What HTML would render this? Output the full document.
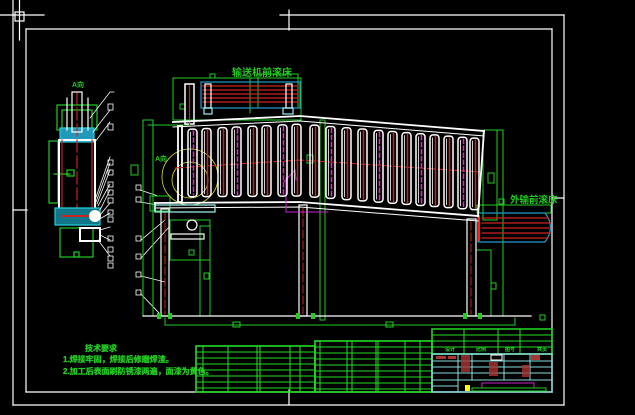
<!DOCTYPE html>
<html><head><meta charset="utf-8"><style>
html,body{margin:0;padding:0;background:#000;width:635px;height:415px;overflow:hidden}
svg{display:block}
text{font-family:"Liberation Sans","Noto Sans CJK SC",sans-serif;font-weight:bold}
</style></head><body>
<svg id="s" width="635" height="415" viewBox="0 0 635 415" xmlns="http://www.w3.org/2000/svg" fill="none" stroke-linecap="square">
<g stroke="#fff" stroke-width="1.2">
<line x1="13" y1="0" x2="13" y2="405"/><line x1="0" y1="15" x2="44" y2="15"/>
<rect x="15" y="12" width="9" height="9"/><line x1="19.5" y1="0" x2="19.5" y2="40"/>
<line x1="13" y1="405" x2="564" y2="405"/><line x1="564" y1="15" x2="564" y2="405"/>
<line x1="280" y1="15" x2="564" y2="15"/><line x1="289" y1="10" x2="289" y2="30"/>
<line x1="26" y1="29" x2="552" y2="29"/><line x1="26" y1="29" x2="26" y2="392"/>
<line x1="552" y1="29" x2="552" y2="392"/><line x1="26" y1="392" x2="552" y2="392"/>
<line x1="13" y1="210" x2="27" y2="210"/><line x1="289" y1="390" x2="289" y2="405"/>
<line x1="552" y1="198" x2="564" y2="198"/>
</g>
<g stroke-width="1.2">
<rect x="57" y="105" width="40" height="25" stroke="#2c2"/>
<rect x="62" y="110" width="30" height="18" stroke="#2c2"/>
<rect x="49" y="141" width="9" height="62" stroke="#2c2"/>
<line x1="54" y1="174" x2="70" y2="174" stroke="#2c2"/>
<rect x="67" y="170" width="7" height="6" stroke="#2c2"/>
<rect x="60" y="228" width="33" height="29" stroke="#2c2"/>
<rect x="74" y="252" width="5" height="5" stroke="#2c2"/>
<rect x="60" y="128" width="34" height="14" stroke="#2cd" fill="#29b"/>
<rect x="59" y="140" width="36" height="70" stroke="#fff" stroke-width="2"/>
<line x1="62" y1="140" x2="62" y2="210" stroke="#c22"/><line x1="92" y1="140" x2="92" y2="210" stroke="#c22"/>
<line x1="77" y1="92" x2="77" y2="225" stroke="#c22" stroke-dasharray="12 4"/>
<rect x="72" y="92" width="10" height="40" stroke="#fff"/>
<line x1="67" y1="98" x2="67" y2="130" stroke="#fff"/><line x1="88" y1="98" x2="88" y2="130" stroke="#fff"/>
<path d="M55 208 L100 208 L100 225 L55 225 Z" stroke="#2cd" fill="#178"/>
<line x1="62" y1="216" x2="95" y2="216" stroke="#c22" stroke-width="2"/>
<circle cx="95" cy="216" r="6" fill="#fff"/>
<rect x="80" y="228" width="20" height="13" stroke="#fff" stroke-width="2"/>
<text x="72" y="87" font-size="7" fill="#2c2" stroke="none">A向</text>
</g>
<g stroke="#fff" stroke-width="0.8">
<path d="M90 118 L110 92 L114 92 M93 132 L110 110 M95 142 L110 122 M95 200 L110 157 M96 202 L110 163 M97 204 L110 170 M98 206 L110 184 M100 210 L110 190 M100 215 L110 203 M98 220 L110 213 M100 230 L110 227 M100 235 L110 240 M98 240 L110 256"/>
</g>
<g stroke="#fff" stroke-width="0.8" fill="none">
<rect x="108" y="104" width="5" height="6"/><rect x="108" y="124" width="5" height="6"/>
<rect x="108" y="160" width="5" height="5"/><rect x="108" y="170" width="5" height="5"/><rect x="108" y="182" width="5" height="5"/>
<rect x="108" y="190" width="5" height="5"/><rect x="108" y="198" width="5" height="5"/><rect x="108" y="210" width="5" height="5"/><rect x="108" y="217" width="5" height="5"/>
<rect x="108" y="236" width="5" height="5"/><rect x="108" y="247" width="5" height="5"/><rect x="108" y="256" width="5" height="5"/><rect x="108" y="263" width="5" height="5"/>
<rect x="136" y="185" width="5" height="5"/><rect x="136" y="197" width="5" height="5"/><rect x="136" y="236" width="5" height="5"/><rect x="136" y="254" width="5" height="5"/><rect x="136" y="272" width="5" height="5"/><rect x="136" y="290" width="5" height="5"/>
<path d="M140 190 L158 196 M140 202 L158 205 M141 240 L165 220 M141 258 L170 226 M141 276 L165 282 M141 294 L160 314"/>
</g>
<g stroke="#2c2" stroke-width="1">
<rect x="143" y="120" width="10" height="196"/>
<line x1="148" y1="125" x2="190" y2="125"/>
<rect x="173" y="78" width="128" height="42"/>
<line x1="250" y1="78" x2="250" y2="113"/>
<rect x="210" y="74" width="5" height="4"/>
<rect x="180" y="104" width="5" height="5"/>
<line x1="143" y1="316" x2="531" y2="316"/>
<path d="M165 318 L165 325 L515 325 L515 318"/>
<rect x="233" y="322" width="7" height="5"/><rect x="386" y="322" width="7" height="5"/>
<rect x="170" y="220" width="40" height="40"/>
<rect x="200" y="226" width="10" height="90"/>
<rect x="189" y="250" width="5" height="5"/>
<rect x="204" y="273" width="5" height="6"/>
<rect x="320" y="120" width="5" height="200"/>
<rect x="307" y="155" width="6" height="8"/>
<rect x="483" y="130" width="14" height="90"/>
<line x1="497" y1="130" x2="503" y2="130"/>
<rect x="488" y="173" width="6" height="10"/>
<line x1="503" y1="130" x2="503" y2="316"/>
<rect x="476" y="250" width="15" height="66"/>
<rect x="491" y="283" width="5" height="6"/>
<rect x="477" y="205" width="74" height="8"/>
<rect x="499" y="199" width="5" height="5"/>
<rect x="258" y="74" width="40" height="34"/>
<rect x="150" y="196" width="20" height="15"/>
<rect x="131" y="165" width="7" height="10"/>
<rect x="540" y="315" width="5" height="5"/>
</g>
<g stroke-width="1.2">
<rect x="201" y="82" width="99" height="26" stroke="#29c" />
<g stroke="#c22"><line x1="203" y1="86" x2="298" y2="86"/><line x1="203" y1="90" x2="298" y2="90"/><line x1="203" y1="94" x2="298" y2="94"/><line x1="203" y1="98" x2="298" y2="98"/><line x1="203" y1="102" x2="298" y2="102"/></g>
<rect x="205" y="84" width="6" height="24" stroke="#fff"/><rect x="286" y="84" width="6" height="24" stroke="#fff"/>
<rect x="204" y="108" width="8" height="6" stroke="#9ee"/><rect x="283" y="108" width="10" height="6" stroke="#9ee"/>
<rect x="185" y="84" width="9" height="40" stroke="#fff" stroke-width="1.5"/>
<line x1="189.5" y1="86" x2="189.5" y2="125" stroke="#c22"/>
</g>
<text x="232" y="76" font-size="10" fill="#2c2" stroke="none">输送机前滚床</text>
<g stroke-width="1.2">
<path d="M478 213 L545 213 Q556 227 545 242 L478 242 Z" stroke="#29c"/>
<g stroke="#c22"><line x1="482" y1="218" x2="548" y2="218"/><line x1="482" y1="223" x2="550" y2="223"/><line x1="482" y1="228" x2="550" y2="228"/><line x1="482" y1="233" x2="550" y2="233"/><line x1="482" y1="238" x2="548" y2="238"/></g>
<line x1="479" y1="216" x2="479" y2="240" stroke="#f22" stroke-width="2"/>
</g>
<text x="510" y="203" font-size="9.5" fill="#2c2" stroke="none">外输前滚床</text>
<text x="155" y="161" font-size="7" fill="#2c2" stroke="none">A向</text>
<circle cx="190" cy="177" r="28" stroke="#dd3" stroke-width="0.8"/>
<circle cx="190" cy="180" r="18" stroke="#dd3" stroke-width="0.8"/>
<g stroke="#fff" stroke-width="1.8">
<path d="M173 122 L300 116 L484 131"/>
<path d="M173 127 L300 121 L484 136" stroke-width="1"/>
<path d="M155 203 L300 202 L478 216"/>
<path d="M155 208 L300 207 L478 221" stroke-width="1"/>
<line x1="155" y1="203" x2="155" y2="210"/>
<line x1="143" y1="316" x2="531" y2="316" stroke-width="1.2"/>
<rect x="161" y="209" width="8" height="107" stroke-width="1.2"/>
<rect x="299" y="205" width="8" height="111" stroke-width="1.2"/>
<rect x="467" y="219" width="9" height="97" stroke-width="1.2"/>
<rect x="178" y="126" width="4" height="76"/>
<line x1="484" y1="131" x2="478" y2="216"/>
</g>
<g stroke="#c22" stroke-width="1" stroke-dasharray="8 3">
<line x1="165" y1="212" x2="165" y2="314"/><line x1="303" y1="208" x2="303" y2="314"/><line x1="471" y1="222" x2="471" y2="314"/>
<path d="M175 168 L300 160 L480 172"/>
</g>
<g stroke="#c2c" stroke-width="1">
<path d="M286 178 L286 212 L328 212"/>
<path d="M284 182 L295 170 L296 180"/>
</g>
<g id="rollers"></g>
<g fill="#2c2" stroke="none">
<rect x="157" y="313" width="4" height="6"/><rect x="168" y="313" width="4" height="6"/><rect x="296" y="313" width="4" height="6"/><rect x="311" y="313" width="4" height="6"/><rect x="463" y="313" width="4" height="6"/><rect x="478" y="313" width="4" height="6"/>
</g>
<g stroke="#fff" stroke-width="1.2">
<circle cx="192" cy="225" r="5"/><rect x="171" y="234" width="33" height="5"/>
<path d="M155 205 L215 205 L215 212 L155 212 Z" stroke="#9ee"/>
</g>
<g fill="#2c2" stroke="#2c2" stroke-width="0.3" font-size="8">
<text x="85" y="351">技术要求</text>
<text x="63" y="362">1.焊接牢固，焊接后修磨焊渣。</text>
<text x="63" y="374">2.加工后表面刷防锈漆两遍，面漆为黄色。</text>
</g>
<g stroke="#2d2" stroke-width="1">
<rect x="196" y="346" width="119" height="46" stroke-width="1.6"/>
<rect x="315" y="341" width="117" height="51" stroke-width="1.6"/>
<g id="tbl"></g>
</g>
<g stroke-width="1">
<rect x="432" y="329" width="120" height="25" stroke="#2d2" stroke-width="1.5"/>
<line x1="432" y1="335" x2="552" y2="335" stroke="#2d2"/><line x1="432" y1="341" x2="552" y2="341" stroke="#2d2"/><line x1="432" y1="347" x2="552" y2="347" stroke="#2d2"/>
<line x1="464" y1="329" x2="464" y2="354" stroke="#2d2"/><line x1="498" y1="329" x2="498" y2="354" stroke="#2d2"/><line x1="520" y1="329" x2="520" y2="354" stroke="#2d2"/>
<rect x="432" y="354" width="120" height="38" stroke="#8dd" stroke-width="1.5"/>
<line x1="458" y1="354" x2="458" y2="392" stroke="#8dd"/><line x1="472" y1="354" x2="472" y2="380" stroke="#8dd"/><line x1="504" y1="354" x2="504" y2="380" stroke="#8dd"/><line x1="530" y1="354" x2="530" y2="380" stroke="#8dd"/>
<line x1="432" y1="361" x2="552" y2="361" stroke="#8dd"/><line x1="432" y1="367" x2="552" y2="367" stroke="#8dd"/><line x1="432" y1="373" x2="552" y2="373" stroke="#8dd"/><line x1="432" y1="380" x2="552" y2="380" stroke="#8dd"/><line x1="432" y1="386" x2="458" y2="386" stroke="#8dd"/>
<rect x="436" y="356" width="10" height="3" fill="#a33" stroke="none"/><rect x="448" y="356" width="8" height="3" fill="#a33" stroke="none"/>
<rect x="461" y="355" width="9" height="17" fill="#a33" stroke="none" opacity=".8"/><rect x="489" y="362" width="9" height="14" fill="#a33" stroke="none" opacity=".8"/><rect x="522" y="365" width="8" height="12" fill="#a33" stroke="none" opacity=".8"/><rect x="531" y="355" width="9" height="5" fill="#a33" stroke="none"/>
<rect x="491" y="355" width="11" height="5" stroke="#fff"/>
<rect x="465" y="385" width="5" height="6" fill="#ff0" stroke="none"/>
<rect x="482" y="383" width="52" height="5" stroke="#c2c"/>
<rect x="472" y="388" width="74" height="3" stroke="#2c2"/>
<g fill="#2d2" stroke="none" font-size="5"><text x="445" y="351">设计</text><text x="476" y="351">比例</text><text x="505" y="351">图号</text><text x="537" y="351">共页</text></g>
</g>
</svg>
<script>
var ns="http://www.w3.org/2000/svg",R=document.getElementById('rollers');
function top2(x){return x<300?116+(300-x)*6/127:116+(x-300)*15/184;}
function botY(x){return x<300?203-(x-155)/145:202+(x-300)*14/178;}
function el(n,a){var e=document.createElementNS(ns,n);for(var k in a)e.setAttribute(k,a[k]);R.appendChild(e);return e;}
var xs=[192,206,222,236,252,266,282,296,314,330,346,362,378,392,406,420,434,448,462,474];
xs.forEach(function(x,i){var t=top2(x)+8,b=botY(x)-6;
el('rect',{x:x-4,y:t,width:9,height:b-t,rx:3,stroke:'#fff','stroke-width':1.5});
el('line',{x1:x-1.5,y1:t+3,x2:x-1.5,y2:b-3,stroke:'#fff','stroke-width':0.8});
el('line',{x1:x+1.5,y1:t+2,x2:x+1.5,y2:b-2,stroke:(i%3==0?'#e2c':'#c22'),'stroke-width':1.5,'stroke-dasharray':i%3==0?'4 3':''});
});
var T=document.getElementById('tbl');
function L(x1,y1,x2,y2){var e=document.createElementNS(ns,'line');e.setAttribute('x1',x1);e.setAttribute('y1',y1);e.setAttribute('x2',x2);e.setAttribute('y2',y2);T.appendChild(e);}
for(var y=352;y<392;y+=6){L(196,y,315,y);}
for(var y=347;y<392;y+=6){L(315,y,432,y);}
[203,228,257,260,290,300].forEach(function(x){L(x,346,x,392);});
[320,347,352,376,378,405,420].forEach(function(x){L(x,341,x,392);});
</script>
</body></html>
